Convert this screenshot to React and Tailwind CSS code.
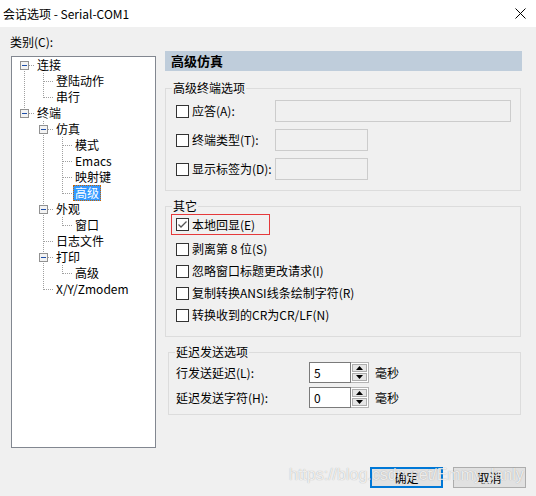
import React from 'react';

// tree rows: cols describe the dotted guide drawn in each indent column
const treeRows = [
  { label: '连接', cols: ['first'], exp: true },
  { label: '登陆动作', cols: ['v', 'tee'] },
  { label: '串行', cols: ['v', 'end'] },
  { label: '终端', cols: ['end'], exp: true },
  { label: '仿真', cols: ['', 'tee'], exp: true },
  { label: '模式', cols: ['', 'v', 'tee'] },
  { label: 'Emacs', cols: ['', 'v', 'tee'] },
  { label: '映射键', cols: ['', 'v', 'tee'] },
  { label: '高级', cols: ['', 'v', 'end'], selected: true },
  { label: '外观', cols: ['', 'tee'], exp: true },
  { label: '窗口', cols: ['', 'v', 'end'] },
  { label: '日志文件', cols: ['', 'tee'] },
  { label: '打印', cols: ['', 'tee'], exp: true },
  { label: '高级', cols: ['', 'v', 'end'] },
  { label: 'X/Y/Zmodem', cols: ['', 'end'] },
];

function Guide({ kind, exp }) {
  const dot = { stroke: '#a0a0a0', strokeWidth: 1, strokeDasharray: '1 1' };
  return (
    <svg width="19" height="16" className="shrink-0" shapeRendering="crispEdges">
      {(kind === 'v' || kind === 'tee') && <line x1="9.5" y1="0" x2="9.5" y2="16" {...dot} />}
      {kind === 'end' && <line x1="9.5" y1="0" x2="9.5" y2="9" {...dot} />}
      {kind === 'first' && <line x1="9.5" y1="8" x2="9.5" y2="16" {...dot} />}
      {kind && kind !== 'v' && <line x1={exp ? 14 : 10} y1="8.5" x2="19" y2="8.5" {...dot} />}
      {exp && (
        <g>
          <rect x="5.5" y="4.5" width="8" height="8" fill="#f3f3f3" stroke="#919191" />
          <line x1="7" y1="8.5" x2="12" y2="8.5" stroke="#1f4fa8" />
        </g>
      )}
    </svg>
  );
}

function Checkbox({ checked }) {
  return (
    <span className="w-[13px] h-[13px] shrink-0 border border-[#333333] bg-white flex items-center justify-center">
      {checked && (
        <svg width="11" height="11" viewBox="0 0 11 11">
          <path d="M1.5 5.5 L4 8 L9.5 2.5" fill="none" stroke="#555555" strokeWidth="1.3" />
        </svg>
      )}
    </span>
  );
}

function Spinner({ value }) {
  return (
    <div className="flex h-[21px]">
      <div className="w-[42px] h-full border border-[#7a7a7a] bg-white pl-[4px] flex items-center leading-[14px]">
        {value}
      </div>
      <div className="w-[18px] h-full border-y border-r border-[#b4b4b4] bg-white p-[1px] flex flex-col gap-[1px]">
        <div className="flex-1 bg-[#e5e5e5] border border-[#adadad] flex items-center justify-center">
          <svg width="7" height="4"><polygon points="0,4 7,4 3.5,0" fill="#000" /></svg>
        </div>
        <div className="flex-1 bg-[#e5e5e5] border border-[#adadad] flex items-center justify-center">
          <svg width="7" height="4"><polygon points="0,0 7,0 3.5,4" fill="#000" /></svg>
        </div>
      </div>
    </div>
  );
}

export default function App() {
  return (
    <div className="relative w-[536px] h-[496px] bg-[#f0f0f0] overflow-hidden text-[12px] text-black font-['Noto_Sans_CJK_SC','Noto_Sans',sans-serif]">
      {/* title bar */}
      <div className="h-[27px] bg-white flex items-center justify-between pl-[3px] pr-[10px]">
        <span className="leading-[16px]">会话选项 - Serial-COM1</span>
        <svg width="11" height="11" viewBox="0 0 11 11">
          <path d="M0.5 0.5 L10.5 10.5 M10.5 0.5 L0.5 10.5" stroke="#000" strokeWidth="1" />
        </svg>
      </div>

      <div className="flex">
        {/* category tree */}
        <div className="pl-[10px] pt-[7px] w-[156px]">
          <div className="leading-[16px]">类别(C):</div>
          <div className="mt-[6px] ml-[1px] w-[145px] h-[392px] bg-white border border-[#828790] pl-[3px]">
            {treeRows.map((row, i) => (
              <div key={i} className="flex items-center h-[16px]">
                {row.cols.map((c, j) => (
                  <Guide key={j} kind={c} exp={row.exp && j === row.cols.length - 1} />
                ))}
                <span
                  className={
                    row.selected
                      ? 'ml-[1px] px-[1px] leading-[14px] bg-[#3399ff] text-white border border-dotted border-[#c86400]'
                      : 'ml-[2px] px-[1px] leading-[16px]'
                  }
                >
                  {row.label}
                </span>
              </div>
            ))}
          </div>
        </div>

        {/* settings panel */}
        <div className="ml-[9px] pt-[24px] w-[357px]">
          <div className="h-[20px] bg-[#bfcddb] pl-[6px] flex items-center font-bold text-[13px]">高级仿真</div>

          <fieldset className="mt-[9px] mr-[1px] border border-[#dcdcdc]">
            <legend className="ml-[6px] px-[1px] leading-[16px]">高级终端选项</legend>
            <div className="pl-[10px] pt-[4px] pb-[10px] flex flex-col gap-[7px]">
              <div className="flex items-center h-[22px]">
                <label className="w-[99px] flex items-center gap-[3px]">
                  <Checkbox />
                  <span>应答(A):</span>
                </label>
                <div className="w-[236px] h-[22px] border border-[#cccccc] bg-[#f0f0f0]" />
              </div>
              <div className="flex items-center h-[22px]">
                <label className="w-[99px] flex items-center gap-[3px]">
                  <Checkbox />
                  <span>终端类型(T):</span>
                </label>
                <div className="w-[93px] h-[22px] border border-[#cccccc] bg-[#f0f0f0]" />
              </div>
              <div className="flex items-center h-[22px]">
                <label className="w-[99px] flex items-center gap-[3px]">
                  <Checkbox />
                  <span>显示标签为(D):</span>
                </label>
                <div className="w-[93px] h-[22px] border border-[#cccccc] bg-[#f0f0f0]" />
              </div>
            </div>
          </fieldset>

          <fieldset className="mt-[7px] mr-[1px] border border-[#dcdcdc]">
            <legend className="ml-[6px] px-[1px] leading-[16px]">其它</legend>
            <div className="pb-[10px]">
              <div className="ml-[5px] w-[99px] h-[21px] border border-[#e5393b] pl-[4px] flex items-center gap-[3px]">
                <Checkbox checked />
                <span>本地回显(E)</span>
              </div>
              <div className="mt-[3px] pl-[10px]">
                {['剥离第 8 位(S)', '忽略窗口标题更改请求(I)', '复制转换ANSI线条绘制字符(R)', '转换收到的CR为CR/LF(N)'].map((t) => (
                  <label key={t} className="h-[22px] flex items-center gap-[3px]">
                    <Checkbox />
                    <span>{t}</span>
                  </label>
                ))}
              </div>
            </div>
          </fieldset>

          <fieldset className="mt-[7px] ml-[3px] mr-[1px] border border-[#dcdcdc]">
            <legend className="ml-[6px] px-[1px] leading-[16px]">延迟发送选项</legend>
            <div className="pl-[7px] pt-[2px] pb-[6px] flex flex-col gap-[4px]">
              <div className="flex items-center h-[21px]">
                <span className="w-[133px]">行发送延迟(L):</span>
                <Spinner value="5" />
                <span className="ml-[6px]">毫秒</span>
              </div>
              <div className="flex items-center h-[21px]">
                <span className="w-[133px]">延迟发送字符(H):</span>
                <Spinner value="0" />
                <span className="ml-[6px]">毫秒</span>
              </div>
            </div>
          </fieldset>
        </div>
      </div>

      {/* dialog buttons */}
      <div className="mt-[19px] pr-[10px] flex justify-end gap-[10px]">
        <button className="w-[73px] h-[21px] bg-[#e1e1e1] border-2 border-[#0078d7] flex items-center justify-center">确定</button>
        <button className="w-[73px] h-[21px] bg-[#e1e1e1] border border-[#adadad] flex items-center justify-center">取消</button>
      </div>

      {/* blog watermark */}
      <div className="absolute left-[289px] top-[463px] text-[16px] leading-[24px] text-white/80 font-['Liberation_Sans',sans-serif] [text-shadow:0_0_1px_rgba(0,0,0,0.35)] pointer-events-none">
        https://blog.csdn.net/Emmy_lanly
      </div>
    </div>
  );
}
